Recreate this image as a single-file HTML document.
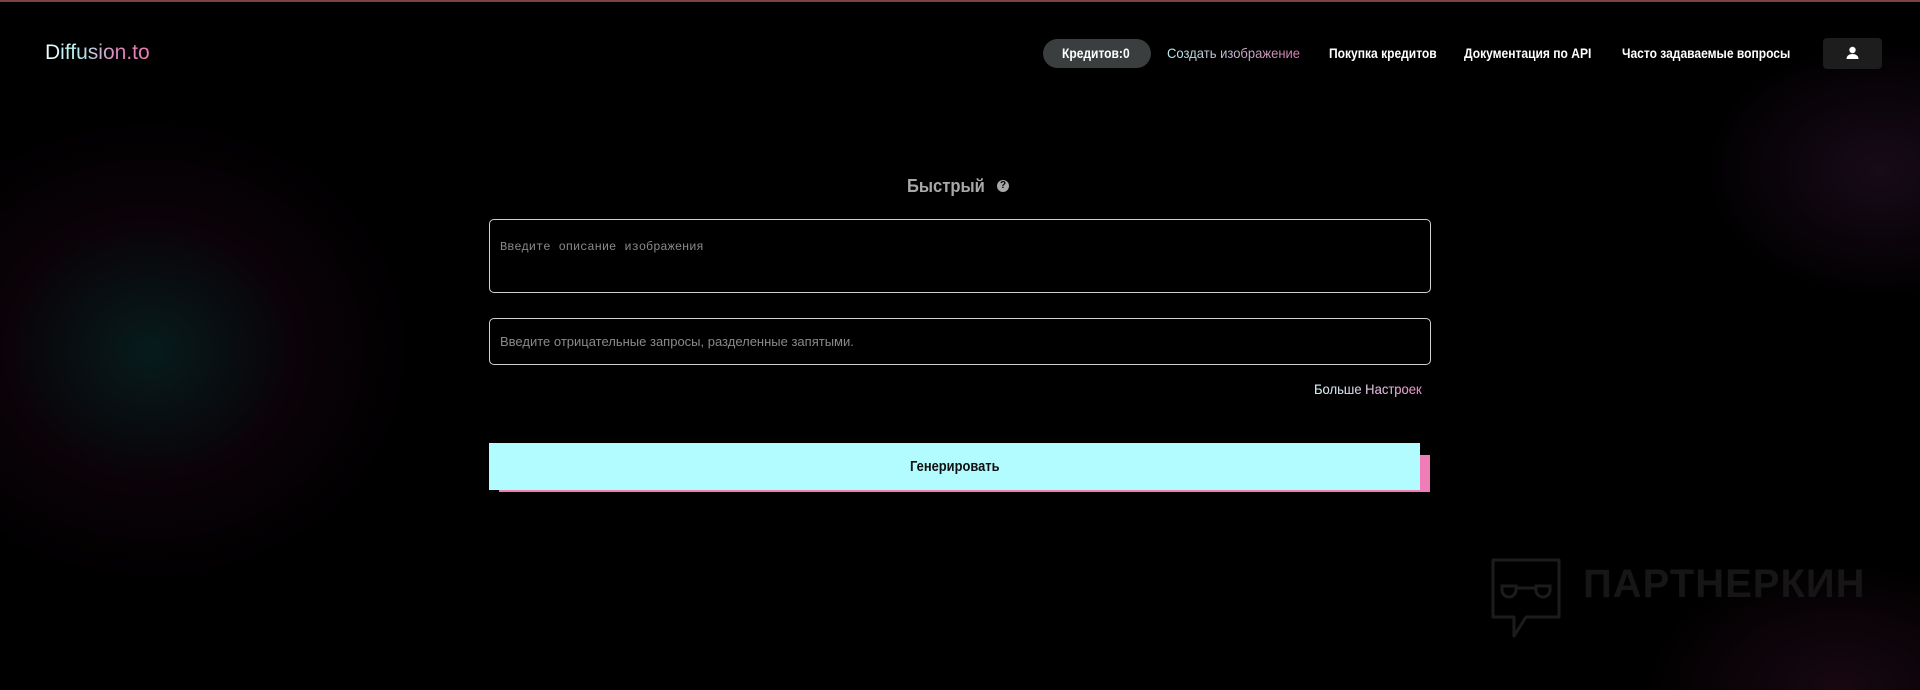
<!DOCTYPE html>
<html><head><meta charset="utf-8"><style>
*{margin:0;padding:0;box-sizing:border-box}
html,body{width:1920px;height:690px;background:#000;overflow:hidden;font-family:"Liberation Sans",sans-serif;position:relative}
.topline{position:absolute;left:0;top:0;width:1920px;height:2px;background:#7a4444}
.glow{position:absolute;pointer-events:none}
.logo{position:absolute;left:45px;top:41px;font-family:"Liberation Sans",sans-serif;font-size:21px;background:linear-gradient(90deg,#f0ffff,#b0f0f0 30%,#e07fb8 70%,#f07cb4);-webkit-background-clip:text;color:transparent}
.c{display:inline-block;transform:scaleX(.86);transform-origin:left center;white-space:nowrap}
.nav{position:absolute;top:39px;height:29px;line-height:29px;font-size:14px;color:#fff;font-weight:bold}
.pill{position:absolute;left:1043px;top:39px;width:108px;height:29px;border-radius:15px;background:#3b3e3e;color:#fff;font-weight:bold;font-size:14px;line-height:29px;padding-left:19px}
.grad{background:linear-gradient(90deg,#b8eef0,#d37cb0);-webkit-background-clip:text;color:transparent;font-weight:normal}
.user{position:absolute;left:1823px;top:38px;width:59px;height:31px;border-radius:4px;background:#1d1d1d}
.title{position:absolute;left:907px;top:176px;font-size:18px;font-weight:bold;color:#a8a8a8}
.q{position:absolute;left:997px;top:180px;width:12px;height:12px;border-radius:50%;background:#a8a8a8;color:#000;font-size:10px;font-weight:bold;text-align:center;line-height:12px}
.box{position:absolute;left:489px;width:942px;border:1px solid #d0d0d0;border-radius:5px}
.ph1{position:absolute;left:10px;top:20px;font-family:"Liberation Mono",monospace;font-size:12px;color:#8a8a8a;word-spacing:1px}
.ph2{position:absolute;left:10px;top:15px;font-size:13px;color:#8a8a8a}
.more{position:absolute;left:1314px;top:381px;font-size:14px}
.more span{background:linear-gradient(90deg,#c8eef0,#d88ab8);-webkit-background-clip:text;color:transparent}
.pink{position:absolute;left:499px;top:455px;width:931px;height:37px;background:#f07cb8}
.btn{position:absolute;left:489px;top:443px;width:931px;height:47px;background:#b2fbff;color:#111;font-size:15px;font-weight:bold;line-height:47px}
.wm{position:absolute;left:1583px;top:562px;font-family:"Liberation Sans",sans-serif;font-size:40px;font-weight:bold;color:#161616;letter-spacing:1px}
</style></head><body>
<div class="topline"></div>
<div class="glow" style="left:-120px;top:110px;width:540px;height:480px;background:radial-gradient(closest-side at 50% 50%,rgba(15,60,60,.45),rgba(45,10,35,.22) 55%,rgba(0,0,0,0) 100%)"></div>
<div class="glow" style="left:1700px;top:40px;width:360px;height:260px;background:radial-gradient(closest-side,rgba(60,25,60,.4),rgba(0,0,0,0) 100%)"></div>
<div class="glow" style="left:1640px;top:560px;width:400px;height:260px;background:radial-gradient(closest-side,rgba(60,18,45,.4),rgba(0,0,0,0) 100%)"></div>
<div class="logo">Diffusion.to</div>
<div class="pill"><span class="c">Кредитов:0</span></div>
<div class="nav" style="left:1167px"><span class="c grad" style="transform:scaleX(.93)">Создать изображение</span></div>
<div class="nav" style="left:1329px"><span class="c">Покупка кредитов</span></div>
<div class="nav" style="left:1464px"><span class="c">Документация по API</span></div>
<div class="nav" style="left:1622px"><span class="c">Часто задаваемые вопросы</span></div>
<div class="user"><svg width="59" height="31" viewBox="0 0 59 31"><circle cx="29.5" cy="12" r="3.2" fill="#fff"/><path d="M23.5 21c0-3.5 3-5 6-5s6 1.5 6 5z" fill="#fff"/></svg></div>
<div class="title"><span class="c" style="transform:scaleX(.92)">Быстрый</span></div>
<div class="q">?</div>
<div class="box" style="top:219px;height:74px"><div class="ph1">Введите описание изображения</div></div>
<div class="box" style="top:318px;height:47px"><div class="ph2"><span class="c" style="transform:none">Введите отрицательные запросы, разделенные запятыми.</span></div></div>
<div class="more"><span class="c" style="transform:scaleX(.93)"><span>Больше Настроек</span></span></div>
<div class="pink"></div>
<div class="btn"><span class="c" style="position:absolute;left:421px">Генерировать</span></div>
<svg style="position:absolute;left:1488px;top:556px" width="76" height="84" viewBox="0 0 76 84"><path d="M5 4h66v57H38l-12 19V61H5z" fill="none" stroke="#1c1c1c" stroke-width="3" stroke-linejoin="round"/><path d="M14 30h14v4a7 7 0 0 1-14 0zM48 30h14v4a7 7 0 0 1-14 0zM28 32h20" fill="none" stroke="#1c1c1c" stroke-width="3"/></svg>
<div class="wm">ПАРТНЕРКИН</div>
</body></html>
